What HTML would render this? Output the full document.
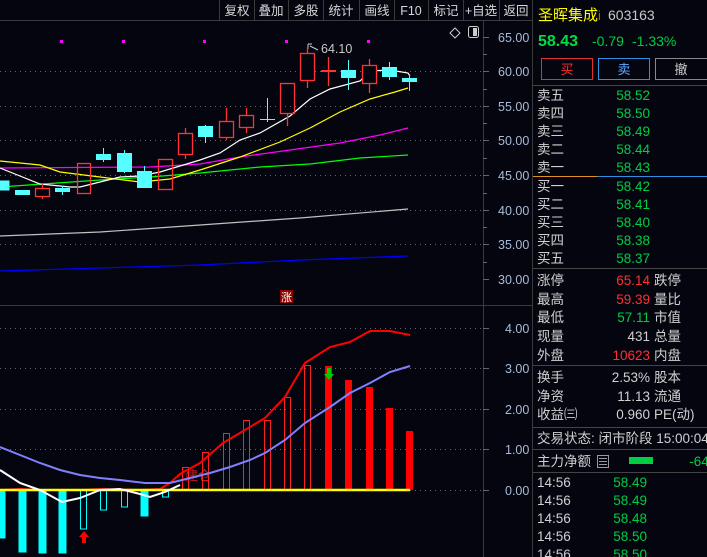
<!DOCTYPE html><html><head><meta charset="utf-8"><style>
body{margin:0;background:#05050f;width:707px;height:557px;overflow:hidden;font-family:"Liberation Sans","Noto Sans CJK SC",sans-serif}
svg{position:absolute;left:0;top:0}
</style></head><body>
<svg width="707" height="557" xmlns="http://www.w3.org/2000/svg" font-family="Liberation Sans, Noto Sans CJK SC, sans-serif">
<rect width="707" height="557" fill="#05050f"/>
<!-- toolbar -->
<line x1="0" y1="20.5" x2="533" y2="20.5" stroke="#3a3a3a"/>
<g stroke="#3a3a3a"><line x1="219.5" y1="0" x2="219.5" y2="20"/><line x1="254.5" y1="0" x2="254.5" y2="20"/><line x1="288.5" y1="0" x2="288.5" y2="20"/><line x1="323.5" y1="0" x2="323.5" y2="20"/><line x1="359.5" y1="0" x2="359.5" y2="20"/><line x1="394.5" y1="0" x2="394.5" y2="20"/><line x1="428.5" y1="0" x2="428.5" y2="20"/><line x1="463.5" y1="0" x2="463.5" y2="20"/><line x1="499.5" y1="0" x2="499.5" y2="20"/></g>
<g fill="#d8d8d8" font-size="12.5" text-anchor="middle"><text x="237" y="15">复权</text><text x="271" y="15">叠加</text><text x="306" y="15">多股</text><text x="341" y="15">统计</text><text x="377" y="15">画线</text><text x="411" y="15">F10</text><text x="446" y="15">标记</text><text x="481" y="15">+自选</text><text x="516" y="15">返回</text></g>
<!-- axis -->
<line x1="483.5" y1="21" x2="483.5" y2="557" stroke="#3a3a3a"/>
<line x1="532.5" y1="0" x2="532.5" y2="557" stroke="#3a3a3a"/>
<line x1="0" y1="305.5" x2="533" y2="305.5" stroke="#3a3a3a"/>
<g stroke="#666" stroke-dasharray="1,4">
<line x1="0" y1="71.5" x2="483" y2="71.5"/><line x1="0" y1="106.5" x2="483" y2="106.5"/><line x1="0" y1="140.5" x2="483" y2="140.5"/><line x1="0" y1="175.5" x2="483" y2="175.5"/><line x1="0" y1="210.5" x2="483" y2="210.5"/><line x1="0" y1="244.5" x2="483" y2="244.5"/>
<line x1="0" y1="328.5" x2="483" y2="328.5"/><line x1="0" y1="368.5" x2="483" y2="368.5"/><line x1="0" y1="409.5" x2="483" y2="409.5"/><line x1="0" y1="449.5" x2="483" y2="449.5"/><line x1="410" y1="490.5" x2="483" y2="490.5"/>
</g>
<g stroke="#666"><line x1="483" y1="37.5" x2="489" y2="37.5"/><line x1="483" y1="54.5" x2="487" y2="54.5"/><line x1="483" y1="71.5" x2="489" y2="71.5"/><line x1="483" y1="89.5" x2="487" y2="89.5"/><line x1="483" y1="106.5" x2="489" y2="106.5"/><line x1="483" y1="123.5" x2="487" y2="123.5"/><line x1="483" y1="140.5" x2="489" y2="140.5"/><line x1="483" y1="158.5" x2="487" y2="158.5"/><line x1="483" y1="175.5" x2="489" y2="175.5"/><line x1="483" y1="193.5" x2="487" y2="193.5"/><line x1="483" y1="210.5" x2="489" y2="210.5"/><line x1="483" y1="227.5" x2="487" y2="227.5"/><line x1="483" y1="244.5" x2="489" y2="244.5"/><line x1="483" y1="262.5" x2="487" y2="262.5"/><line x1="483" y1="279.5" x2="489" y2="279.5"/>
<line x1="483" y1="328.5" x2="489" y2="328.5"/><line x1="483" y1="368.5" x2="489" y2="368.5"/><line x1="483" y1="409.5" x2="489" y2="409.5"/><line x1="483" y1="449.5" x2="489" y2="449.5"/><line x1="483" y1="490.5" x2="489" y2="490.5"/></g>
<g fill="#a8bcd8" font-size="12.5"><text x="498" y="42">65.00</text><text x="498" y="76">60.00</text><text x="498" y="111">55.00</text><text x="498" y="145">50.00</text><text x="498" y="180">45.00</text><text x="498" y="215">40.00</text><text x="498" y="249">35.00</text><text x="498" y="284">30.00</text>
<text x="505" y="333">4.00</text><text x="505" y="373">3.00</text><text x="505" y="414">2.00</text><text x="505" y="454">1.00</text><text x="505" y="495">0.00</text></g>
<!-- icons -->
<path d="M455 28 L460 33 L455 38 L450 33Z" fill="none" stroke="#ccc"/>
<rect x="468.5" y="26.5" width="10" height="11" rx="2" fill="none" stroke="#ccc"/><rect x="473" y="28" width="4" height="8" fill="#ccc"/>
<!-- magenta dots -->
<g fill="#ff00ff"><rect x="60" y="40" width="3" height="3"/><rect x="122" y="40" width="3" height="3"/><rect x="203" y="40" width="3" height="3"/><rect x="285" y="40" width="3" height="3"/><rect x="367" y="40" width="3" height="3"/></g>
<path d="M308 44 L308 49 M308 44 L312 44 M310 46 L318 50" stroke="#ccc" fill="none"/>
<text x="321" y="53" fill="#c8c8c8" font-size="12.5">64.10</text>
<!-- MAs -->
<g fill="none" stroke-width="1.2">
<polyline stroke="#0000ff" points="0,271 100,268 200,265 300,260 408,256"/>
<polyline stroke="#c0c0c0" points="0,236 100,232 200,225 300,218 408,209"/>
<polyline stroke="#00ff00" points="0,187 100,180 150,177 200,173 260,167 310,164 360,158 408,155"/>
<polyline stroke="#ff00ff" points="0,168 150,167 200,164 240,157 290,150 340,143 380,135 408,128"/>
<polyline stroke="#ffff00" points="0,161 40,165 60,172 100,177 140,182 170,179 200,170 240,157 280,142 310,128 340,112 370,99 395,92 408,88"/>
<polyline stroke="#ffffff" points="0,168 20,176 40,184 70,187 80,187 100,182 120,177 140,176 160,172 180,166 200,160 220,153 240,140 260,133 290,116 310,99 330,89 360,81 370,71 390,70 408,73 410,76"/>
</g>
<!-- candles -->
<g fill="#55ffff" stroke="#55ffff">
<rect x="0" y="181" width="9" height="9"/>
<rect x="15.5" y="190.5" width="14" height="4"/>
<line x1="62.5" y1="186" x2="62.5" y2="195"/><rect x="55.5" y="188.5" width="14" height="3"/>
<line x1="103.5" y1="148" x2="103.5" y2="162"/><rect x="96.5" y="154.5" width="14" height="5"/>
<line x1="124.5" y1="150" x2="124.5" y2="173"/><rect x="117.5" y="153.5" width="14" height="18"/>
<line x1="144.5" y1="166" x2="144.5" y2="188"/><rect x="137.5" y="171.5" width="14" height="16"/>
<line x1="205.5" y1="125" x2="205.5" y2="143"/><rect x="198.5" y="126.5" width="14" height="10"/>
<line x1="267.5" y1="98" x2="267.5" y2="122"/><line x1="260" y1="119.5" x2="275" y2="119.5"/>
<line x1="348.5" y1="60" x2="348.5" y2="90"/><rect x="341.5" y="70.5" width="14" height="7"/>
<line x1="389.5" y1="62" x2="389.5" y2="80"/><rect x="382.5" y="67.5" width="14" height="9"/>
<line x1="409.5" y1="75" x2="409.5" y2="91"/><rect x="402.5" y="78.5" width="14" height="3"/>
</g>
<g fill="none" stroke="#ff3333" stroke-width="1.3">
<line x1="42.5" y1="183" x2="42.5" y2="199"/><rect x="35.5" y="188.5" width="14" height="8" fill="#05050f"/>
<rect x="77.5" y="163.5" width="13" height="30"/>
<rect x="158.5" y="159.5" width="14" height="30"/>
<line x1="185.5" y1="128" x2="185.5" y2="159"/><rect x="178.5" y="133.5" width="14" height="21" fill="#05050f"/>
<line x1="226.5" y1="108" x2="226.5" y2="140"/><rect x="219.5" y="121.5" width="14" height="16" fill="#05050f"/>
<line x1="246.5" y1="108" x2="246.5" y2="133"/><rect x="239.5" y="115.5" width="14" height="12" fill="#05050f"/>
<line x1="287.5" y1="113" x2="287.5" y2="126"/><rect x="280.5" y="83.5" width="14" height="30"/>
<line x1="307.5" y1="47" x2="307.5" y2="88"/><rect x="300.5" y="53.5" width="14" height="27" fill="#05050f"/>
<line x1="328.5" y1="57" x2="328.5" y2="86"/><line x1="321" y1="71" x2="336" y2="71" stroke-width="2"/>
<line x1="369.5" y1="59" x2="369.5" y2="93"/><rect x="362.5" y="65.5" width="14" height="18" fill="#05050f"/>
</g>
<!-- zhang -->
<rect x="280" y="290" width="13" height="13" fill="#8b0000"/><text x="281" y="301" font-size="11" fill="#fff">涨</text>
<!-- lower histogram -->
<g fill="#00ffff" stroke="#00ffff">
<rect x="0" y="490" width="5" height="48"/><rect x="19" y="490" width="7" height="62"/><rect x="39" y="490" width="7" height="63"/><rect x="59" y="490" width="7" height="63"/><rect x="141" y="490" width="7" height="26"/>
<g fill="none"><rect x="80.5" y="490" width="6" height="39"/><rect x="100.5" y="490" width="6" height="20"/><rect x="121.5" y="490" width="6" height="17"/><rect x="162.5" y="490" width="6" height="7"/></g>
</g>
<g fill="none" stroke="#ff2020">
<rect x="182.5" y="467.5" width="6" height="23"/><rect x="202.5" y="452.5" width="6" height="38"/><rect x="223.5" y="433.5" width="6" height="57"/><rect x="243.5" y="420.5" width="6" height="70"/><rect x="264.5" y="420.5" width="6" height="70"/><rect x="284.5" y="397.5" width="6" height="93"/><rect x="304.5" y="365.5" width="6" height="125"/>
</g>
<g fill="#ff0000"><rect x="325" y="366" width="7" height="124"/><rect x="345" y="380" width="7" height="110"/><rect x="366" y="387" width="7" height="103"/><rect x="386" y="408" width="7" height="82"/><rect x="406" y="431" width="7" height="59"/></g>
<text x="185" y="480" font-size="13" fill="#ff2020" fill-opacity="0.8">建仓</text>
<g fill="none" stroke-width="2">
<polyline stroke="#ff0000" points="0,490 20,489 40,490 80,490 100,489 140,490 160,489 170,483 180,474 200,463 223,443 245,430 265,418 285,397 305,363 330,347 350,342 370,331 390,331 410,335"/>
<polyline stroke="#ffff00" stroke-width="2.5" points="0,490 410,490"/>
<polyline stroke="#8080ff" points="0,447 20,455 40,463 60,470 80,475 100,478 120,480 145,483 170,483 190,478 210,473 230,467 250,460 265,453 285,440 305,423 330,407 350,393 370,383 390,372 410,366"/>
<polyline stroke="#ffffff" points="0,470 20,483 40,490 62,502 80,498 100,490 120,489 140,494 150,497 165,492 180,485"/>
</g>
<path d="M84 531 L79 537 L82 537 L82 543 L86 543 L86 537 L89 537Z" fill="#ff0000"/>
<path d="M329 380 L324 374 L327 374 L327 368 L331 368 L331 374 L334 374Z" fill="#00cc00"/>
<!-- right panel -->
<text x="538" y="20" font-size="15" fill="#ffff00">圣晖集成</text><text x="598" y="20" font-size="13" fill="#ff3030">i</text>
<text x="608" y="20" font-size="14" fill="#c8c8c8">603163</text>
<text x="538" y="46" font-size="16" font-weight="bold" fill="#00dd44">58.43</text>
<text x="592" y="46" font-size="14" fill="#00cc44">-0.79</text><text x="632" y="46" font-size="14" fill="#00cc44">-1.33%</text>
<rect x="541.5" y="58.5" width="51" height="21" fill="none" stroke="#e03030"/><text x="567" y="74" text-anchor="middle" font-size="13" fill="#ff3030">买</text>
<rect x="598.5" y="58.5" width="51" height="21" fill="none" stroke="#3090e0"/><text x="624" y="74" text-anchor="middle" font-size="13" fill="#60a8ff">卖</text>
<rect x="655.5" y="58.5" width="55" height="21" fill="none" stroke="#888"/><text x="681" y="74" text-anchor="middle" font-size="13" fill="#ccc">撤</text>
<g stroke="#444"><line x1="533" y1="85.5" x2="707" y2="85.5"/><line x1="533" y1="268.5" x2="707" y2="268.5"/><line x1="533" y1="365.5" x2="707" y2="365.5"/><line x1="533" y1="427.5" x2="707" y2="427.5"/><line x1="533" y1="449.5" x2="707" y2="449.5"/><line x1="533" y1="472.5" x2="707" y2="472.5"/></g>
<line x1="533" y1="176.5" x2="597" y2="176.5" stroke="#e09020"/><line x1="597" y1="176.5" x2="707" y2="176.5" stroke="#3090e0"/>
<g font-size="13.5" fill="#d0d0d0">
<text x="537" y="100">卖五</text><text x="537" y="118">卖四</text><text x="537" y="136">卖三</text><text x="537" y="154">卖二</text><text x="537" y="172">卖一</text>
<text x="537" y="191">买一</text><text x="537" y="209">买二</text><text x="537" y="227">买三</text><text x="537" y="245">买四</text><text x="537" y="263">买五</text>
<text x="537" y="285">涨停</text><text x="537" y="304">最高</text><text x="537" y="322">最低</text><text x="537" y="341">现量</text><text x="537" y="360">外盘</text>
<text x="654" y="285">跌停</text><text x="654" y="304">量比</text><text x="654" y="322">市值</text><text x="654" y="341">总量</text><text x="654" y="360">内盘</text>
<text x="537" y="382">换手</text><text x="537" y="401">净资</text><text x="537" y="419">收益㈢</text>
<text x="654" y="382">股本</text><text x="654" y="401">流通</text><text x="654" y="419">PE(动)</text>
<text x="537" y="443">交易状态: 闭市阶段 15:00:04</text>
<text x="537" y="466">主力净额</text>
<text x="537" y="487">14:56</text><text x="537" y="505">14:56</text><text x="537" y="523">14:56</text><text x="537" y="541">14:56</text><text x="537" y="559">14:56</text>
</g>
<g font-size="13.5" fill="#00cc44" text-anchor="end">
<text x="650" y="100">58.52</text><text x="650" y="118">58.50</text><text x="650" y="136">58.49</text><text x="650" y="154">58.44</text><text x="650" y="172">58.43</text>
<text x="650" y="191">58.42</text><text x="650" y="209">58.41</text><text x="650" y="227">58.40</text><text x="650" y="245">58.38</text><text x="650" y="263">58.37</text>
<text x="650" y="322">57.11</text>
<text x="647" y="487">58.49</text><text x="647" y="505">58.49</text><text x="647" y="523">58.48</text><text x="647" y="541">58.50</text><text x="647" y="559">58.50</text>
<text x="720" y="466">-641.</text>
</g>
<g font-size="13.5" text-anchor="end">
<text x="650" y="285" fill="#ff3030">65.14</text><text x="650" y="304" fill="#ff3030">59.39</text><text x="650" y="341" fill="#d0d0d0">431</text><text x="650" y="360" fill="#ff3030">10623</text>
<text x="650" y="382" fill="#d0d0d0">2.53%</text><text x="650" y="401" fill="#d0d0d0">11.13</text><text x="650" y="419" fill="#d0d0d0">0.960</text>
</g>
<rect x="597.5" y="455.5" width="11" height="12" fill="none" stroke="#999"/><g stroke="#999"><line x1="599" y1="458.5" x2="607" y2="458.5"/><line x1="599" y1="461.5" x2="607" y2="461.5"/><line x1="599" y1="464.5" x2="607" y2="464.5"/></g>
<rect x="629" y="457" width="24" height="7" fill="#00cc44"/>
</svg>
</body></html>
